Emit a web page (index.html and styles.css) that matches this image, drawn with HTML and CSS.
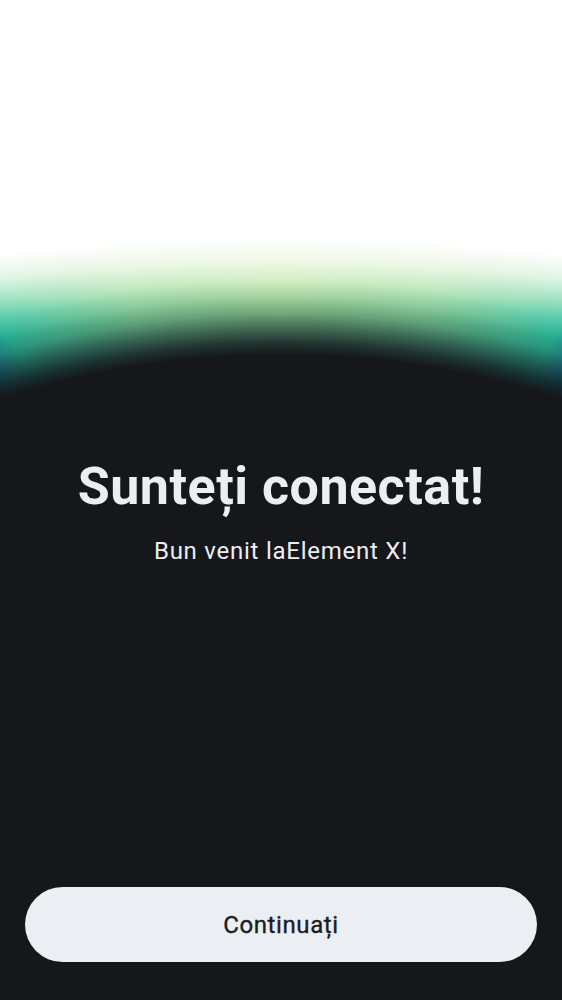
FILE: index.html
```html
<!DOCTYPE html>
<html lang="ro">
<head>
<meta charset="utf-8">
<title>Sunteți conectat!</title>
<link rel="stylesheet" href="styles.css">
</head>
<body>
<main class="screen">
  <section class="hero">
    <h1 class="title">Sunteți conectat!</h1>
    <p class="subtitle">Bun venit laElement X!</p>
  </section>
  <div class="actions">
    <button class="btn-primary" type="button">Continuați</button>
  </div>
</main>
</body>
</html>
```
FILE: styles.css
```css
html, body {
  margin: 0;
  padding: 0;
}
body {
  font-family: Roboto, "Noto Sans", "Liberation Sans", sans-serif;
  background: #15171b;
}
.screen {
  box-sizing: border-box;
  height: 100vh;
  display: flex;
  flex-direction: column;
  background-color: #15171b;
  background-image:
    radial-gradient(750px 485px at 281px 743px,
      #15171b 80%,
      rgba(20,34,38,0.9) 82.5%,
      rgba(22,52,52,0.68) 85.5%,
      rgba(28,72,64,0.38) 88.5%,
      rgba(30,80,70,0.12) 92%,
      rgba(30,80,70,0) 95.5%),
    radial-gradient(1100px 485px at 281px 743px,
      rgba(255,255,255,0) 87.5%,
      rgba(246,251,232,0.22) 91.5%,
      rgba(246,251,228,0.55) 95%,
      rgba(250,253,240,0.85) 99%,
      #ffffff 104%),
    conic-gradient(from 0deg at 281px 743px,
      #a4de96 0deg,
      #86d59a 19deg,
      #48c79e 30deg,
      #2ac09e 34deg,
      #1f9aa6 36.2deg,
      #0b729c 38deg,
      #0b4c7c 42deg,
      #0b4c7c 318deg,
      #0b729c 322deg,
      #1f9aa6 323.8deg,
      #2ac09e 326deg,
      #48c79e 330deg,
      #86d59a 341deg,
      #a4de96 360deg);
  background-repeat: no-repeat;
  padding: 0 25px 38px;
}
.hero {
  flex: 1;
  display: flex;
  flex-direction: column;
  align-items: center;
  padding-top: 457px;
}
.title {
  margin: 0;
  font-size: 52px;
  font-weight: 700;
  line-height: 60px;
  color: #ebeef2;
  letter-spacing: 0.5px;
}
.subtitle {
  margin: 19px 0 0;
  font-size: 24px;
  line-height: 30px;
  font-weight: 400;
  color: #ebeef2;
  letter-spacing: 0.75px;
}
.actions {
  display: flex;
}
.btn-primary {
  flex: 1;
  height: 75px;
  border: none;
  border-radius: 38px;
  background: #ebeef2;
  color: #1b1d22;
  font-family: Roboto, "Noto Sans", "Liberation Sans", sans-serif;
  font-size: 24px;
  font-weight: 400;
  letter-spacing: 0.6px;
  -webkit-text-stroke: 0.35px #1b1d22;
  cursor: pointer;
}
```
